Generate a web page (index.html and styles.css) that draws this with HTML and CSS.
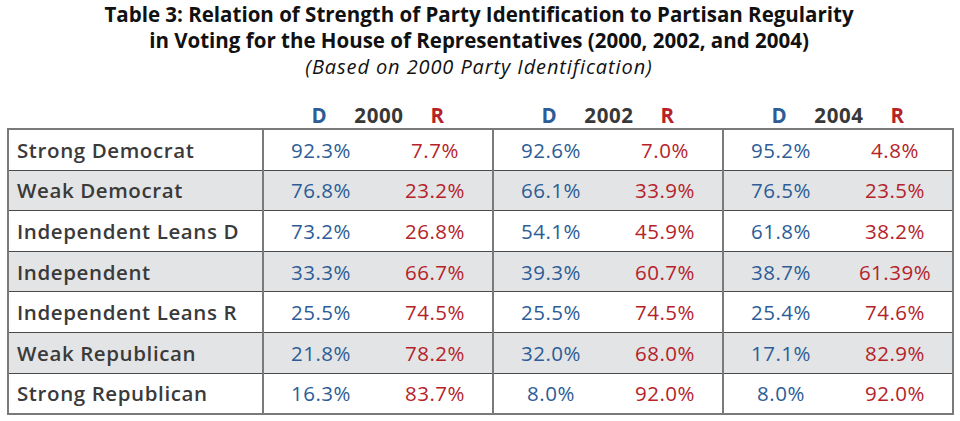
FILE: index.html
```html
<!DOCTYPE html>
<html>
<head>
<meta charset="utf-8">
<link rel="stylesheet" href="styles.css">
</head>
<body>
<div class="page">
  <div class="title">
    <div class="t1">Table 3: Relation of Strength of Party Identification to Partisan Regularity</div>
    <div class="t1">in Voting for the House of Representatives (2000, 2002, and 2004)</div>
    <div class="t2">(Based on 2000 Party Identification)</div>
  </div>
  <div class="head">
    <div class="head-label"></div>
    <div class="head-group"><span class="hd d">D</span><span class="yr">2000</span><span class="hd r">R</span></div>
    <div class="head-group"><span class="hd d">D</span><span class="yr">2002</span><span class="hd r">R</span></div>
    <div class="head-group"><span class="hd d">D</span><span class="yr">2004</span><span class="hd r">R</span></div>
  </div>
  <table class="data">
    <colgroup><col class="c-lbl"><col class="c-v"><col class="c-v"><col class="c-v"><col class="c-v"><col class="c-v"><col class="c-v"></colgroup>
    <tr><td class="lbl">Strong Democrat</td><td class="v d">92.3%</td><td class="v r">7.7%</td><td class="v d g">92.6%</td><td class="v r">7.0%</td><td class="v d g">95.2%</td><td class="v r">4.8%</td></tr>
    <tr class="alt"><td class="lbl">Weak Democrat</td><td class="v d">76.8%</td><td class="v r">23.2%</td><td class="v d g">66.1%</td><td class="v r">33.9%</td><td class="v d g">76.5%</td><td class="v r">23.5%</td></tr>
    <tr><td class="lbl">Independent Leans D</td><td class="v d">73.2%</td><td class="v r">26.8%</td><td class="v d g">54.1%</td><td class="v r">45.9%</td><td class="v d g">61.8%</td><td class="v r">38.2%</td></tr>
    <tr class="alt"><td class="lbl">Independent</td><td class="v d">33.3%</td><td class="v r">66.7%</td><td class="v d g">39.3%</td><td class="v r">60.7%</td><td class="v d g">38.7%</td><td class="v r">61.39%</td></tr>
    <tr><td class="lbl">Independent Leans R</td><td class="v d">25.5%</td><td class="v r">74.5%</td><td class="v d g">25.5%</td><td class="v r">74.5%</td><td class="v d g">25.4%</td><td class="v r">74.6%</td></tr>
    <tr class="alt"><td class="lbl">Weak Republican</td><td class="v d">21.8%</td><td class="v r">78.2%</td><td class="v d g">32.0%</td><td class="v r">68.0%</td><td class="v d g">17.1%</td><td class="v r">82.9%</td></tr>
    <tr><td class="lbl">Strong Republican</td><td class="v d">16.3%</td><td class="v r">83.7%</td><td class="v d g">8.0%</td><td class="v r">92.0%</td><td class="v d g">8.0%</td><td class="v r">92.0%</td></tr>
  </table>
</div>
</body>
</html>
```
FILE: styles.css
```css
html, body {
  margin: 0;
  padding: 0;
  background: #ffffff;
}
body {
  font-family: "Open Sans", Lato, sans-serif;
  width: 960px;
  height: 421px;
  overflow: hidden;
}
.page {
  padding: 1px 0 0 7px;
}
.title {
  width: 944px;
  text-align: center;
  color: #111;
}
.t1 {
  font-size: 20.5px;
  font-weight: 700;
  line-height: 26px;
}
.t2 {
  font-size: 20px;
  font-style: italic;
  line-height: 26px;
  letter-spacing: 0.9px;
  padding-top: 1px;
}
.head {
  display: flex;
  height: 26px;
  margin-top: 22px;
  align-items: flex-end;
}
.head-label {
  width: 255px;
}
.head-group {
  display: grid;
  grid-template-columns: 115px 115px;
  width: 230px;
  font-size: 20.5px;
  font-weight: 700;
  line-height: 26px;
  letter-spacing: 0.6px;
}
.head-group .hd, .head-group .yr {
  grid-row: 1;
  text-align: center;
}
.head-group .hd.d { grid-column: 1; }
.head-group .hd.r { grid-column: 2; padding-left: 6px; }
.head-group .yr { grid-column: 1 / 3; color: #383838; padding-left: 4px; }
.d { color: #2d5c96; }
.r { color: #b52329; }
.data {
  border-collapse: collapse;
  width: 945px;
  table-layout: fixed;
  border: 2px solid #7a7a7a;
}
.c-lbl { width: 255px; }
.c-v { width: 115px; }
.data td {
  height: 39.6px;
  padding: 0;
  border-top: 1px solid #4a4a4a;
  font-size: 20.5px;
  line-height: 24px;
}
.data tr:first-child td {
  border-top: 2px solid #7a7a7a;
}
.data .lbl {
  padding-left: 8px;
  color: #3a3a3a;
  font-weight: 600;
  letter-spacing: 0.6px;
  border-right: 2px solid #7a7a7a;
  white-space: nowrap;
}
.data .v {
  text-align: center;
  letter-spacing: 0.5px;
}
.data .g {
  border-left: 2px solid #7a7a7a;
}
.data tr.alt td {
  background: #e3e4e6;
}
```
